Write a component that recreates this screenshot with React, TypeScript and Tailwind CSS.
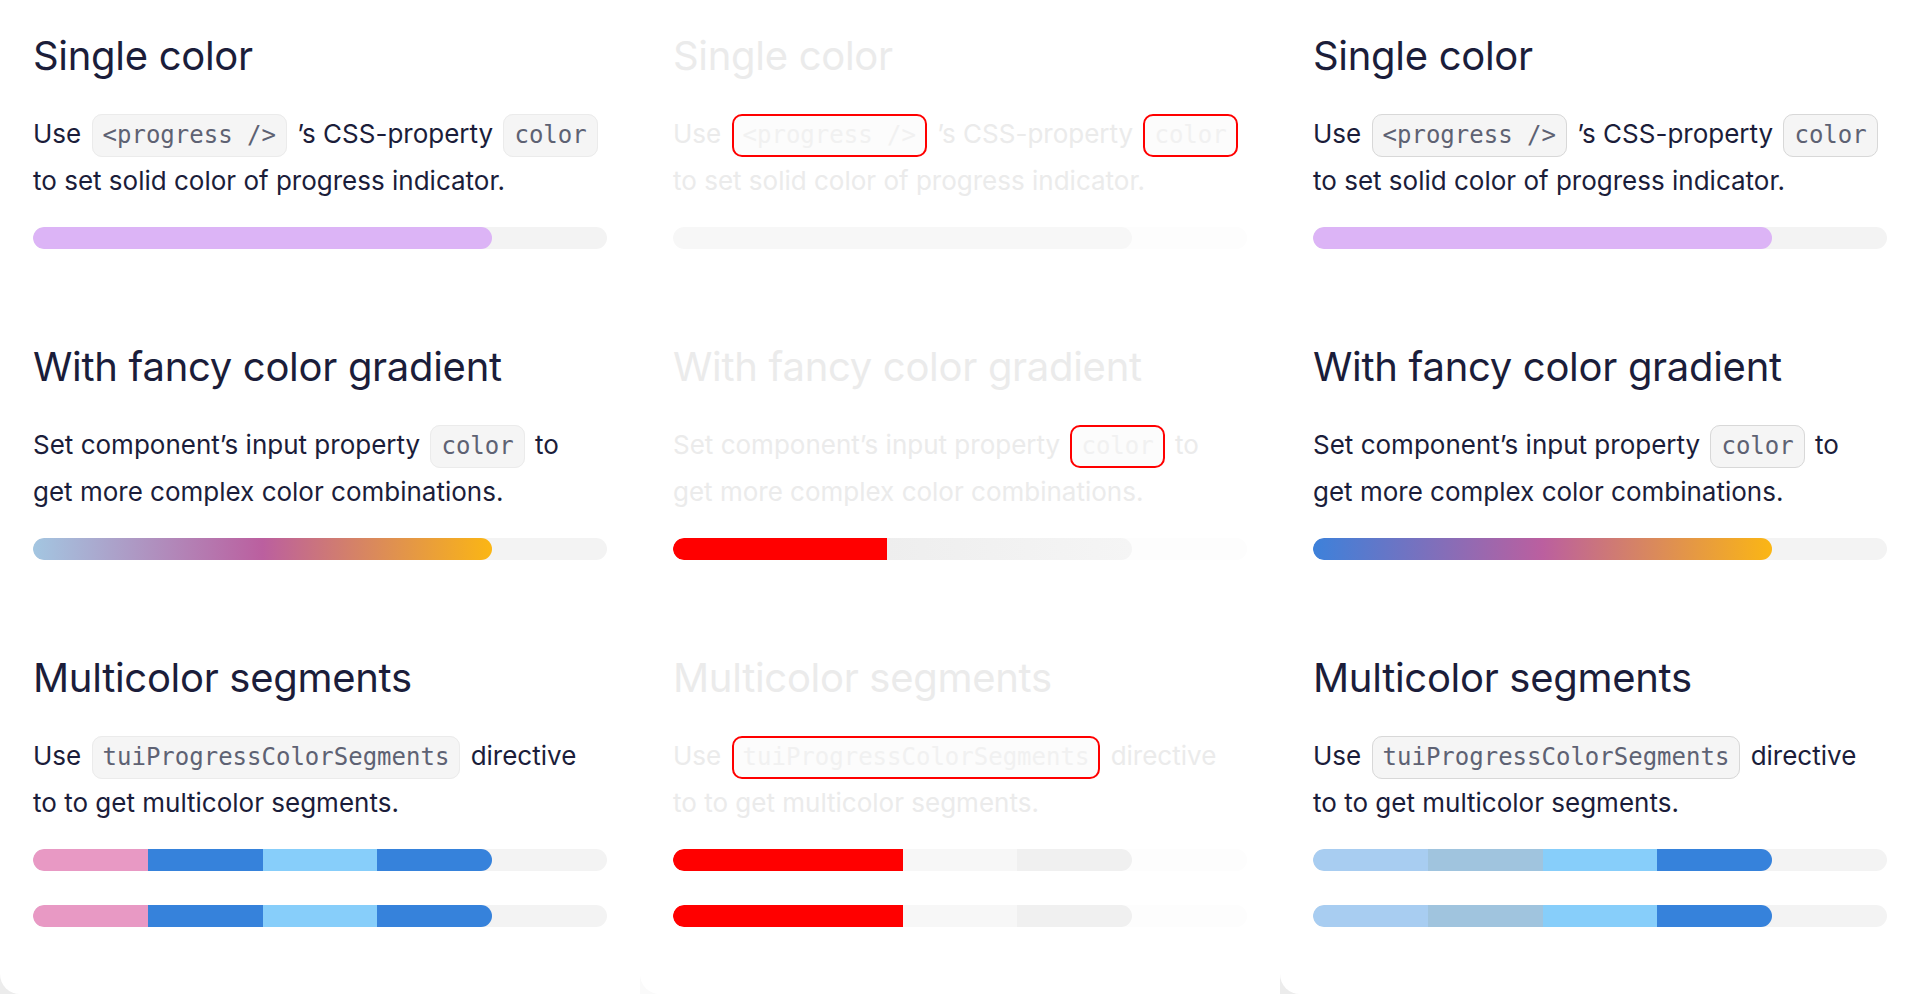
import React from 'react';

type Variant = 'left' | 'diff' | 'right';

const sans = "font-['Inter','Noto_Sans',sans-serif]";
const mono = "font-['DejaVu_Sans_Mono','Liberation_Mono',monospace]";

const Code = ({ v, children }: { v: Variant; children: React.ReactNode }) => {
    if (v === 'diff') {
        return (
            <code className={`${mono} mx-[3px] rounded-[10px] border-2 border-[#ff0000] bg-[#fcfcfc] px-[9px] pt-[5px] pb-[6px] text-[24px] leading-none text-[#f1f1f1]`}>
                {children}
            </code>
        );
    }
    return (
        <code
            className={`${mono} mx-[3px] rounded-[10px] border bg-[#f5f5f5] px-[10px] pt-[6px] pb-[7px] text-[24px] leading-none text-[#5e6273] ${v === 'right' ? 'border-[#d8d8d8]' : 'border-[#ebebeb]'}`}
        >
            {children}
        </code>
    );
};

const Track = ({ v, children }: { v: Variant; children: React.ReactNode }) => (
    <div className={`h-[22px] w-full overflow-hidden rounded-full ${v === 'diff' ? 'bg-[#fdfdfd]' : 'bg-[#f3f3f3]'}`}>
        {children}
    </div>
);

const SingleBar = ({ v }: { v: Variant }) => (
    <Track v={v}>
        <div className={`h-full w-[80%] rounded-full ${v === 'diff' ? 'bg-[#f7f7f7]' : 'bg-[#dcb4f6]'}`} />
    </Track>
);

const GradientBar = ({ v }: { v: Variant }) => {
    if (v === 'diff') {
        return (
            <Track v={v}>
                <div className="flex h-full w-[80%] overflow-hidden rounded-full">
                    <div className="h-full w-[46.6%] bg-[#ff0000]" />
                    <div className="h-full flex-1 bg-[linear-gradient(to_right,#eeeeee,#f5f5f5)]" />
                </div>
            </Track>
        );
    }
    const grad =
        v === 'left'
            ? 'bg-[linear-gradient(to_right,#a3c6e1,#bb5f9f,#fbb614)]'
            : 'bg-[linear-gradient(to_right,#3d81da,#bb5f9f,#fbb614)]';
    return (
        <Track v={v}>
            <div className={`h-full w-[80%] rounded-full ${grad}`} />
        </Track>
    );
};

const segColors: Record<Variant, string[]> = {
    left: ['bg-[#e899c4]', 'bg-[#3682db]', 'bg-[#87cefa]', 'bg-[#3682db]'],
    diff: ['bg-[#ff0000]', 'bg-[#ff0000]', 'bg-[#f7f7f7]', 'bg-[#f0f0f0]'],
    right: ['bg-[#a8cdf1]', 'bg-[#a0c4de]', 'bg-[#87cefa]', 'bg-[#3682db]'],
};

const SegmentBar = ({ v }: { v: Variant }) => (
    <Track v={v}>
        <div className="flex h-full w-[80%] overflow-hidden rounded-full">
            {segColors[v].map((c, i) => (
                <div key={i} className={`h-full flex-1 ${c}`} />
            ))}
        </div>
    </Track>
);

const Section = ({ v, title, lines, children }: { v: Variant; title: string; lines: React.ReactNode[]; children: React.ReactNode }) => {
    const text = v === 'diff' ? 'text-[#ebebeb]' : 'text-[#1b1d3a]';
    return (
        <section>
            <h3 className={`${sans} ${text} text-[40px] font-normal leading-[48px] tracking-[-0.3px]`}>{title}</h3>
            <p className={`${sans} ${text} mt-[30px] text-[26px] leading-[47px]`}>
                {lines.map((line, i) => (
                    <span key={i} className="block whitespace-nowrap">
                        {line}
                    </span>
                ))}
            </p>
            <div className="mt-[23px] flex flex-col gap-[34px]">{children}</div>
        </section>
    );
};

const Column = ({ v }: { v: Variant }) => (
    <div className={`h-full w-[640px] shrink-0 ${v === 'diff' ? 'bg-[#fafafa]' : 'bg-[#ececec]'}`}>
        <div className="flex h-full flex-col gap-[94px] rounded-bl-[20px] bg-white px-[33px] pt-[32px]">
            <Section
                v={v}
                title="Single color"
                lines={[
                    <>
                        Use <Code v={v}>&lt;progress /&gt;</Code> ’s CSS-property <Code v={v}>color</Code>
                    </>,
                    'to set solid color of progress indicator.',
                ]}
            >
                <SingleBar v={v} />
            </Section>
            <Section
                v={v}
                title="With fancy color gradient"
                lines={[
                    <>
                        Set component’s input property <Code v={v}>color</Code> to
                    </>,
                    'get more complex color combinations.',
                ]}
            >
                <GradientBar v={v} />
            </Section>
            <Section
                v={v}
                title="Multicolor segments"
                lines={[
                    <>
                        Use <Code v={v}>tuiProgressColorSegments</Code> directive
                    </>,
                    'to to get multicolor segments.',
                ]}
            >
                <SegmentBar v={v} />
                <SegmentBar v={v} />
            </Section>
        </div>
    </div>
);

const App = () => (
    <div className="flex h-[994px] w-[1920px] overflow-hidden bg-white">
        <Column v="left" />
        <Column v="diff" />
        <Column v="right" />
    </div>
);

export default App;
